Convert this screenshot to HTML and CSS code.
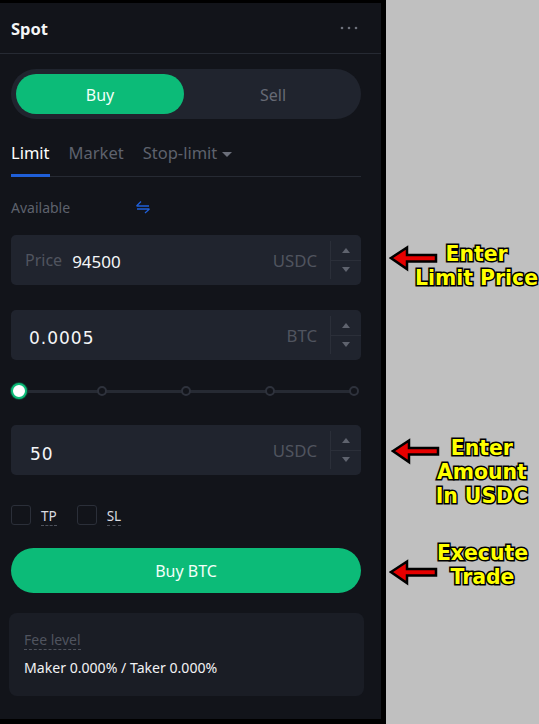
FILE: index.html
```html
<!DOCTYPE html>
<html lang="en">
<head>
<meta charset="utf-8">
<title>Spot</title>
<link rel="stylesheet" href="styles.css">
</head>
<body>
<main class="panel">
  <header class="head">
    <span class="title">Spot</span>
    <svg class="more" width="18" height="4" viewBox="0 0 18 4"><circle cx="2" cy="2" r="1.3"/><circle cx="9" cy="2" r="1.3"/><circle cx="16" cy="2" r="1.3"/></svg>
  </header>
  <div class="body">
    <div class="toggle">
      <div class="side on">Buy</div>
      <div class="side off">Sell</div>
    </div>
    <nav class="tabs">
      <span class="tab active">Limit</span>
      <span class="tab">Market</span>
      <span class="tab">Stop-limit<i class="caret"></i></span>
    </nav>
    <div class="avail">
      <span>Available</span>
      <svg class="swap" width="14" height="14" viewBox="0 0 14 14"><path d="M0.5 6 H13 M0.5 6 L5 1.5 M13.5 9 H1 M13.5 9 L9 13"/></svg>
    </div>
    <div class="field first">
      <span class="ph">Price</span><span class="val">94500</span>
      <span class="unit">USDC</span>
      <div class="step"><div class="up"><i></i></div><div class="dn"><i></i></div></div>
    </div>
    <div class="field second">
      <span class="val wide">0.0005</span>
      <span class="unit">BTC</span>
      <div class="step"><div class="up"><i></i></div><div class="dn"><i></i></div></div>
    </div>
    <div class="slider">
      <i class="thumb"></i><i class="dot"></i><i class="dot"></i><i class="dot"></i><i class="dot"></i>
    </div>
    <div class="field">
      <span class="val wide fifty">50</span>
      <span class="unit">USDC</span>
      <div class="step"><div class="up"><i></i></div><div class="dn"><i></i></div></div>
    </div>
    <div class="checks">
      <i class="box"></i><span class="lbl">TP</span>
      <i class="box"></i><span class="lbl">SL</span>
    </div>
    <button class="buy">Buy BTC</button>
    <section class="fee">
      <div class="fee-k"><span>Fee level</span></div>
      <div class="fee-v">Maker 0.000% / Taker 0.000%</div>
    </section>
  </div>
</main>
<aside class="notes">
  <svg class="arrow a1" width="50" height="30" viewBox="0 0 50 30"><path d="M2 13 L18 2.5 V10 H47 V16.5 H18 V24 Z"/></svg>
  <p class="note n1">Enter<br>Limit Price</p>
  <svg class="arrow a2" width="50" height="30" viewBox="0 0 50 30"><path d="M2 13 L18 2.5 V10 H47 V16.5 H18 V24 Z"/></svg>
  <p class="note n2">Enter<br>Amount<br>In USDC</p>
  <svg class="arrow a3" width="50" height="30" viewBox="0 0 50 30"><path d="M2 13 L18 2.5 V10 H47 V16.5 H18 V24 Z"/></svg>
  <p class="note n3">Execute<br>Trade</p>
</aside>
</body>
</html>
```

FILE: styles.css
```css
* { box-sizing: border-box; }
html, body { margin: 0; height: 100%; }
body {
  width: 539px;
  height: 724px;
  overflow: hidden;
  display: flex;
  background: #000;
  font-family: "Noto Sans", sans-serif;
  color: #fff;
}
.panel {
  width: 381px;
  height: 716px;
  margin-top: 3px;
  background: #12141a;
  flex: none;
}
.head {
  height: 51px;
  border-bottom: 1px solid #262a33;
  display: flex;
  align-items: center;
  justify-content: space-between;
  padding: 0 23px 0 11px;
}
.title { font-size: 16.5px; font-weight: 700; color: #f4f5f6; }
.more { fill: #6d717b; }
.body { padding: 15px 20px 0 11px; }
.toggle {
  height: 50px;
  border-radius: 25px;
  background: #20242e;
  padding: 5px;
  display: flex;
}
.side {
  flex: 1;
  border-radius: 20px;
  display: flex;
  align-items: center;
  justify-content: center;
  padding-top: 1px;
  font-size: 16px;
  color: #666a75;
}
.side.off { padding-left: 6px; }
.side.on { flex: none; width: 168px; background: #0cbb78; color: #f3fff9; }
.tabs {
  margin-top: 17px;
  height: 41px;
  display: flex;
  gap: 19px;
  border-bottom: 1px solid #262a33;
}
.tab {
  font-size: 16.5px;
  line-height: 34px;
  color: #5e626d;
  height: 41px;
  white-space: nowrap;
}
.tab.active { color: #fff; border-bottom: 3px solid #1f5fd8; }
.caret {
  display: inline-block;
  margin-left: 5px;
  vertical-align: 2px;
  border: 5px solid transparent;
  border-top: 5px solid #6b6f7a;
  border-bottom: 0;
}
.avail {
  height: 58px;
  display: flex;
  align-items: center;
  font-size: 14px;
  color: #5e626d;
  padding-top: 2px;
}
.swap { margin-left: 66px; fill: none; stroke: #1f5fd8; stroke-width: 1.3; }
.field {
  height: 50px;
  background: #20242e;
  border-radius: 5px;
  display: flex;
  align-items: center;
  padding-left: 14px;
}
.first { margin-bottom: 25px; }
.ph { font-size: 16px; color: #50545f; margin-right: 10px; }
.val { font-size: 17px; color: #f5f6f7; padding-top: 2px; }
.wide {
  font-family: "DejaVu Sans", sans-serif;
  font-size: 17px;
  letter-spacing: 1px;
  padding: 6px 0 0 4px;
}
.fifty { padding: 8px 0 0 5px; }
.unit { margin-left: auto; font-size: 16.8px; color: #50545f; margin-right: 13px; }
.step {
  width: 31px;
  height: 38px;
  border-left: 1px solid #2b2f39;
  display: flex;
  flex-direction: column;
}
.up, .dn { flex: 1; display: flex; align-items: center; justify-content: center; }
.up { border-bottom: 1px solid #2b2f39; }
.up i, .dn i { width: 0; height: 0; border: 4.5px solid transparent; }
.up i { border-bottom: 5px solid #5f636e; border-top: 0; }
.dn i { border-top: 5px solid #5f636e; border-bottom: 0; }
.slider {
  height: 65px;
  display: flex;
  align-items: center;
  justify-content: space-between;
  padding: 0 2px 3px 2px;
  background: linear-gradient(#262a33, #262a33) center 30px / calc(100% - 10px) 3px no-repeat;
}
.thumb {
  width: 16px;
  height: 16px;
  margin: 0 -4px 0 -2px;
  border-radius: 50%;
  background: #fff;
  border: 2.5px solid #0cbb78;
  box-shadow: 0 0 0 1px #0d4a35;
}
.dot {
  width: 10px;
  height: 10px;
  border-radius: 50%;
  background: #12141a;
  border: 2px solid #2e323c;
}
.checks {
  margin-top: 30px;
  height: 20px;
  display: flex;
  align-items: center;
}
.box {
  width: 20px;
  height: 20px;
  border: 1px solid #2b2f39;
  border-radius: 3px;
}
.lbl {
  margin-left: 10px;
  margin-right: 20px;
  font-size: 13.5px;
  line-height: 18px;
  color: #d9dbe0;
  border-bottom: 1px dashed #4d515b;
  margin-top: 3px;
}
.buy {
  display: block;
  width: 100%;
  height: 45px;
  margin-top: 23px;
  border: 0;
  border-radius: 23px;
  background: #0cbb78;
  color: #f3fff9;
  font: 16px "Noto Sans", sans-serif;
}
.fee {
  margin: 20px -3px 0 -2px;
  height: 83px;
  border-radius: 8px;
  background: #1a1d25;
  padding: 17px 15px 0;
}
.fee-k { font-size: 14px; line-height: 19px; color: #50545f; }
.fee-k span { display: inline-block; border-bottom: 1px dashed #4d515b; }
.fee-v { margin-top: 8px; font-size: 14.1px; line-height: 19px; color: #f1f2f4; }
.notes {
  position: relative;
  flex: none;
  width: 153px;
  margin-left: 5px;
  background: #c0c0c0;
}
.arrow { position: absolute; fill: #e60000; stroke: #000; stroke-width: 2.5; }
.a1 { left: 3px; top: 245px; }
.a2 { left: 5px; top: 438px; }
.a3 { left: 3px; top: 559px; }
.note {
  position: absolute;
  margin: 0;
  text-align: center;
  white-space: nowrap;
  font-family: "DejaVu Sans", sans-serif;
  font-weight: 700;
  font-size: 20.4px;
  line-height: 24px;
  color: #ffff00;
  -webkit-text-stroke: 3px #000;
  paint-order: stroke fill;
}
.n1 { right: 1px; top: 242px; }
.n2 { right: 11px; top: 436px; }
.n3 { right: 11px; top: 541px; }
```
